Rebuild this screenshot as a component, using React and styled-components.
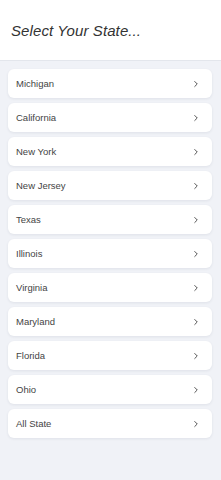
import React from "react";
import styled, { createGlobalStyle } from "styled-components";
import { ChevronRight } from "lucide-react";

const states = [
  "Michigan",
  "California",
  "New York",
  "New Jersey",
  "Texas",
  "Illinois",
  "Virginia",
  "Maryland",
  "Florida",
  "Ohio",
  "All State",
];

function App() {
  return (
    <>
      <GlobalStyle />
      <Page>
        <Header>
          <Title>Select Your State...</Title>
        </Header>
        <List>
          {states.map((name) => (
            <StateRow key={name}>
              <span>{name}</span>
              <ChevronRight size={10} strokeWidth={2.2} />
            </StateRow>
          ))}
        </List>
      </Page>
    </>
  );
}

const GlobalStyle = createGlobalStyle`
  html, body {
    margin: 0;
    padding: 0;
    background: #f0f2f7;
  }
  body {
    font-family: "Liberation Sans", Arial, sans-serif;
  }
`;

const Page = styled.div`
  width: 221px;
  min-height: 480px;
  background: #f0f2f7;
  display: flex;
  flex-direction: column;
`;

const Header = styled.div`
  height: 61px;
  background: #ffffff;
  border-bottom: 1px solid #e3e6ec;
  display: flex;
  align-items: center;
  padding-left: 11px;
  box-sizing: border-box;
  padding-top: 1px;
`;

const Title = styled.h1`
  margin: 0;
  font-size: 15px;
  font-weight: 400;
  font-style: italic;
  color: #333333;
  letter-spacing: 0.1px;
`;

const List = styled.div`
  display: flex;
  flex-direction: column;
  gap: 5px;
  padding: 8px 9px 0 8px;
`;

const StateRow = styled.div`
  height: 29px;
  background: #ffffff;
  border-radius: 6px;
  box-shadow: 0 1px 3px rgba(30, 40, 70, 0.08);
  display: flex;
  align-items: center;
  justify-content: space-between;
  padding: 0 11px 0 8px;
  box-sizing: border-box;
  font-size: 9.5px;
  color: #444444;

  svg {
    color: #444444;
  }
`;

export default App;
